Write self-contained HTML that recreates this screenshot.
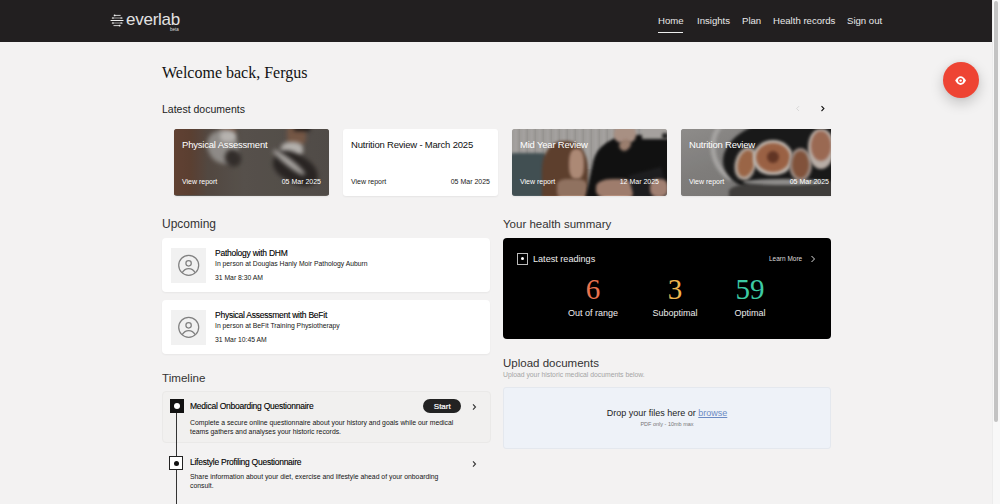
<!DOCTYPE html>
<html><head><meta charset="utf-8">
<style>
*{box-sizing:border-box;margin:0;padding:0}
html,body{width:1000px;height:504px;overflow:hidden}
body{background:#f3f2f2;font-family:"Liberation Sans",sans-serif;color:#111;position:relative}
.abs{position:absolute}
.hdr{left:0;top:0;width:992px;height:42px;background:#221f20}
.nav{color:#e8e8e8;font-size:9.6px;top:14.6px;white-space:nowrap}
.sb{left:992px;top:0;width:8px;height:504px;background:#f8f8f8;border-left:1px solid #ececec}
.thumb{left:994px;top:1px;width:4px;height:421px;background:#c3c3c3;border-radius:2px}
.serif{font-family:"Liberation Serif",serif}
.h2{font-size:10.5px;color:#222;white-space:nowrap}
.h3{font-size:12px;color:#333;white-space:nowrap}
.img{left:0;top:0;width:155px;height:67px;overflow:hidden}
.bl{filter:blur(1.5px)}
.bl2{filter:blur(2.2px)}
.card{border-radius:3px;overflow:hidden;width:155px;height:67px;top:129px;box-shadow:0 1px 2px rgba(0,0,0,.06)}
.ct{font-size:9.5px;color:#fff;left:8px;top:10px;white-space:nowrap;letter-spacing:-0.2px}
.cv{font-size:7px;color:#fff;left:8px;top:49px;white-space:nowrap}
.cd{font-size:7px;color:#fff;right:8px;top:49px;white-space:nowrap}
.up{left:162px;width:328px;height:54px;background:#fff;border-radius:4px;box-shadow:0 1px 2px rgba(0,0,0,.05)}
.ib{left:9px;top:10px;width:35px;height:35px;background:#f1f1f1}
.ut{left:53px;font-size:8.5px;color:#000;white-space:nowrap;letter-spacing:-0.25px;-webkit-text-stroke:0.12px #000}
.us{left:53px;font-size:6.8px;color:#151515;white-space:nowrap}
</style></head><body>
<div class="abs hdr"></div>
<!-- logo -->
<svg class="abs" style="left:106px;top:8px" width="24" height="24" viewBox="0 0 24 24">
<g stroke-linecap="round" fill="none">
<path d="M8.3 7.4H14.3" stroke="#cfcfcf" stroke-width="1"/>
<circle cx="8.6" cy="7.4" r="0.9" fill="#eee"/>
<path d="M6.4 10H15.9" stroke="#9a9a9a" stroke-width="1.1"/>
<path d="M6.4 10H7.4M14.9 10H15.9" stroke="#e8e8e8" stroke-width="1.2"/>
<path d="M5 12.5H17.1" stroke="#eeeeee" stroke-width="1.1"/>
<path d="M6.4 15H15.9" stroke="#9a9a9a" stroke-width="1.1"/>
<path d="M6.4 15H7.4M14.9 15H15.9" stroke="#e8e8e8" stroke-width="1.2"/>
<path d="M7.9 17.6H13.9" stroke="#cfcfcf" stroke-width="1"/>
<circle cx="13.6" cy="17.6" r="0.9" fill="#eee"/>
</g></svg>
<div class="abs" style="left:126px;top:10px;font-size:17px;color:#e2e2e2;letter-spacing:-0.25px">everlab</div>
<div class="abs" style="left:170px;top:27px;font-size:4.5px;color:#ddd">beta</div>
<div class="abs nav" style="left:658px">Home</div>
<div class="abs" style="left:658px;top:32px;width:25px;height:1px;background:#eee"></div>
<div class="abs nav" style="left:697px">Insights</div>
<div class="abs nav" style="left:742px">Plan</div>
<div class="abs nav" style="left:773px">Health records</div>
<div class="abs nav" style="left:847px">Sign out</div>

<div class="abs sb"></div>
<div class="abs thumb"></div>

<div class="abs serif" style="left:162px;top:64px;font-size:16px;color:#111;white-space:nowrap">Welcome back, Fergus</div>
<div class="abs h2" style="left:162px;top:103px">Latest documents</div>
<svg class="abs" style="left:790px;top:100px" width="40" height="16" viewBox="0 0 40 16"><path d="M9 6.2L6.6 8.6L9 11" stroke="#d8d8d8" stroke-width="1" fill="none"/><path d="M31.5 6.2L33.9 8.6L31.5 11" stroke="#111" stroke-width="1.1" fill="none"/></svg>


<!-- cards -->
<div class="abs card" style="left:174px;background:#5d5853">
  <div class="abs img">
    <div class="abs" style="left:0;top:0;width:155px;height:66px;background:linear-gradient(90deg,#6e4a3a 0%,#684838 10%,#5e524a 22%,#625c56 45%,#5c5651 100%)"></div>
    <div class="abs bl2" style="left:46px;top:-4px;width:16px;height:9px;background:#8a6a58;border-radius:40%"></div>
    <div class="abs bl2" style="left:34px;top:1px;width:30px;height:34px;background:#a29e9a;border-radius:45% 45% 50% 50%;transform:rotate(-25deg)"></div>
    <div class="abs bl2" style="left:46px;top:2px;width:16px;height:11px;background:#d0ccc8;border-radius:40%"></div>
    <div class="abs bl2" style="left:51px;top:20px;width:16px;height:18px;background:#3a3431;border-radius:50%;transform:rotate(-30deg)"></div>
    <div class="abs bl2" style="left:113px;top:-4px;width:19px;height:20px;background:#85634f;border-radius:30%"></div>
    <div class="abs bl2" style="left:120px;top:-4px;width:16px;height:6px;background:#221e1c"></div>
    <div class="abs bl2" style="left:107px;top:13px;width:22px;height:15px;background:#cdc9c5;border-radius:40%"></div>
    <div class="abs bl2" style="left:98px;top:26px;width:48px;height:28px;background:#2f2a28;border-radius:40% 50% 50% 40%;transform:rotate(30deg)"></div>
    <div class="abs bl2" style="left:95px;top:30px;width:40px;height:7px;background:#bcb8b4;border-radius:50%;transform:rotate(38deg)"></div>
    <div class="abs" style="left:0;top:0;width:155px;height:66px;background:rgba(0,0,0,.12)"></div>
  </div>
  <div class="abs ct">Physical Assessment</div>
  <div class="abs cv">View report</div>
  <div class="abs cd">05 Mar 2025</div>
</div>
<div class="abs card" style="left:343px;background:#fff">
  <div class="abs ct" style="color:#111">Nutrition Review - March 2025</div>
  <div class="abs cv" style="color:#222">View report</div>
  <div class="abs cd" style="color:#222">05 Mar 2025</div>
</div>
<div class="abs card" style="left:512px;background:#a8a5a2">
  <div class="abs img">
    <div class="abs" style="left:0;top:0;width:155px;height:40px;background:repeating-linear-gradient(90deg,#b4b1ae 0,#bcb9b6 4px,#a9a6a3 8px)"></div>
    <div class="abs bl" style="left:-4px;top:24px;width:40px;height:46px;background:#4b5a5e;border-radius:6px"></div>
    <div class="abs bl" style="left:30px;top:12px;width:46px;height:62px;background:#6a4834;border-radius:45% 45% 10% 10%"></div>
    <div class="abs bl" style="left:57px;top:20px;width:15px;height:30px;background:#c49c86;border-radius:40%"></div>
    <div class="abs bl" style="left:45px;top:50px;width:30px;height:20px;background:#a4826e;border-radius:30%"></div>
    <div class="abs bl" style="left:80px;top:6px;width:80px;height:64px;background:#141414;border-radius:40% 10% 0 0;transform:skewX(-12deg)"></div>
    <div class="abs bl" style="left:130px;top:-4px;width:30px;height:14px;background:#bcb8b4"></div>
    <div class="abs bl" style="left:102px;top:-4px;width:22px;height:18px;background:#c0a496;border-radius:40%"></div>
    <div class="abs bl" style="left:108px;top:10px;width:10px;height:12px;background:#b0907e;border-radius:40%;transform:rotate(45deg)"></div>
    <div class="abs bl" style="left:150px;top:4px;width:6px;height:6px;background:#222;border-radius:50%"></div>
    <div class="abs bl" style="left:84px;top:50px;width:40px;height:20px;background:#b48e7c;border-radius:40%"></div>
    <div class="abs bl" style="left:119px;top:42px;width:34px;height:26px;background:#222224;transform:rotate(-15deg)"></div>
    <div class="abs bl" style="left:138px;top:50px;width:18px;height:18px;background:#b89282;border-radius:40%"></div>
    <div class="abs" style="left:0;top:0;width:155px;height:66px;background:rgba(0,0,0,.12)"></div>
  </div>
  <div class="abs ct">Mid Year Review</div>
  <div class="abs cv">View report</div>
  <div class="abs cd">12 Mar 2025</div>
</div>
<div class="abs card" style="left:681px;width:150px;border-radius:3px 0 0 3px;background:#8c8a88">
  <div class="abs img">
    <div class="abs" style="left:0;top:0;width:155px;height:67px;background:linear-gradient(160deg,#9a9896 0%,#8a8886 40%,#7e7c7a 100%)"></div>
    <div class="abs bl" style="left:30px;top:-14px;width:60px;height:70px;border-radius:50%;border:5px solid #b4b2b0;border-right-color:transparent;border-bottom-color:transparent;transform:rotate(-20deg)"></div>
    <div class="abs bl" style="left:42px;top:-12px;width:140px;height:80px;background:#1c1c1c;border-radius:55% 0 0 45%"></div>
    <div class="abs bl" style="left:48px;top:52px;width:110px;height:20px;background:#454341;border-radius:50% 0 0 0"></div>
    <div class="abs bl" style="left:62px;top:50px;width:80px;height:6px;background:#9c9a98;border-radius:50%"></div>
    <div class="abs bl" style="left:54px;top:18px;width:21px;height:33px;background:#c0b4aa;border-radius:50% 40% 40% 50%;transform:rotate(15deg)"></div>
    <div class="abs bl" style="left:57px;top:21px;width:16px;height:27px;background:#a86e4c;border-radius:50%;transform:rotate(15deg)"></div>
    <div class="abs bl" style="left:72px;top:11px;width:40px;height:35px;background:#cfc6be;border-radius:50% 50% 45% 45%"></div>
    <div class="abs bl" style="left:75px;top:14px;width:34px;height:29px;background:#a86a4a;border-radius:50%"></div>
    <div class="abs bl" style="left:86px;top:22px;width:12px;height:12px;background:#6a3a28;border-radius:50%"></div>
    <div class="abs bl" style="left:108px;top:19px;width:23px;height:33px;background:#a89890;border-radius:50%"></div>
    <div class="abs bl" style="left:111px;top:22px;width:17px;height:27px;background:#8c5a40;border-radius:50%"></div>
    <div class="abs bl" style="left:127px;top:0px;width:26px;height:40px;background:#c8bcb4;border-radius:45% 45% 50% 50%"></div>
    <div class="abs bl" style="left:130px;top:2px;width:20px;height:30px;background:#a8725a;border-radius:50%"></div>
    <div class="abs" style="left:0;top:0;width:155px;height:67px;background:rgba(0,0,0,.08)"></div>
  </div>
  <div class="abs ct">Nutrition Review</div>
  <div class="abs cv">View report</div>
  <div class="abs cd" style="right:2px">05 Mar 2025</div>
</div>

<div class="abs h3" style="left:162px;top:217px">Upcoming</div>
<div class="abs up" style="top:238px">
  <div class="abs ib"><svg width="35" height="35" viewBox="0 0 35 35"><g stroke="#808080" stroke-width="1.25" fill="none"><circle cx="17.7" cy="17.3" r="10"/><circle cx="17.6" cy="15.3" r="2.7"/><path d="M11.2 24.6c1.6-2.8 3.9-4.1 6.5-4.1s4.9 1.3 6.5 4.1"/></g></svg></div>
  <div class="abs ut" style="top:10px">Pathology with DHM</div>
  <div class="abs us" style="top:22px">In person at Douglas Hanly Moir Pathology Auburn</div>
  <div class="abs us" style="top:36px">31 Mar 8:30 AM</div>
</div>
<div class="abs up" style="top:300px">
  <div class="abs ib"><svg width="35" height="35" viewBox="0 0 35 35"><g stroke="#808080" stroke-width="1.25" fill="none"><circle cx="17.7" cy="17.3" r="10"/><circle cx="17.6" cy="15.3" r="2.7"/><path d="M11.2 24.6c1.6-2.8 3.9-4.1 6.5-4.1s4.9 1.3 6.5 4.1"/></g></svg></div>
  <div class="abs ut" style="top:10px">Physical Assessment with BeFit</div>
  <div class="abs us" style="top:22px">In person at BeFit Training Physiotherapy</div>
  <div class="abs us" style="top:36px">31 Mar 10:45 AM</div>
</div>

<div class="abs h3" style="left:503px;top:218px;font-size:11.5px">Your health summary</div>
<div class="abs" style="left:503px;top:238px;width:328px;height:101px;background:#000;border-radius:4px">
  <div class="abs" style="left:14px;top:15px;width:11px;height:12px;border:1px solid #bbb"><div class="abs" style="left:3px;top:3px;width:3px;height:3px;border-radius:50%;background:#fff"></div></div>
  <div class="abs" style="left:30px;top:15.5px;font-size:9.1px;color:#eee;white-space:nowrap">Latest readings</div>
  <div class="abs" style="left:266px;top:17px;font-size:6.5px;color:#ddd;white-space:nowrap">Learn More</div>
  <svg class="abs" style="left:307px;top:17px" width="6" height="8" viewBox="0 0 6 8"><path d="M1.5 1L4.5 4L1.5 7" stroke="#ddd" stroke-width="1" fill="none"/></svg>
  <div class="abs serif" style="left:60px;top:35px;width:60px;text-align:center;font-size:29px;color:#e8734f">6</div>
  <div class="abs serif" style="left:142px;top:35px;width:60px;text-align:center;font-size:29px;color:#efb54e">3</div>
  <div class="abs serif" style="left:217px;top:35px;width:60px;text-align:center;font-size:29px;color:#3cc9a3">59</div>
  <div class="abs" style="left:50px;top:70px;width:80px;text-align:center;font-size:9px;color:#eee">Out of range</div>
  <div class="abs" style="left:132px;top:70px;width:80px;text-align:center;font-size:9px;color:#eee">Suboptimal</div>
  <div class="abs" style="left:207px;top:70px;width:80px;text-align:center;font-size:9px;color:#eee">Optimal</div>
</div>

<div class="abs h3" style="left:503px;top:356.5px;font-size:11.5px">Upload documents</div>
<div class="abs" style="left:503px;top:371px;font-size:6.8px;color:#a5a5a5;white-space:nowrap">Upload your historic medical documents below.</div>
<div class="abs" style="left:503px;top:387px;width:328px;height:62px;background:#eef2f8;border:1px solid #e4e8ee;border-radius:3px">
  <div class="abs" style="left:0;top:20px;width:326px;text-align:center;font-size:9px;color:#222">Drop your files here or <span style="color:#6b8bc4;text-decoration:underline">browse</span></div>
  <div class="abs" style="left:0;top:33px;width:326px;text-align:center;font-size:5.5px;color:#777">PDF only - 10mb max</div>
</div>

<div class="abs h3" style="left:162px;top:371px;font-size:11.6px">Timeline</div>
<div class="abs" style="left:162px;top:391px;width:329px;height:52px;background:#f1f0ef;border:1px solid #eae9e8;border-radius:4px"></div>
<div class="abs" style="left:176px;top:412px;width:1px;height:92px;background:#333"></div>
<div class="abs" style="left:170px;top:399px;width:14px;height:14px;background:#111"><div class="abs" style="left:4px;top:4px;width:6px;height:6px;border-radius:50%;background:#fff"></div></div>
<div class="abs" style="left:169px;top:456px;width:14px;height:14px;background:#fff;border:1px solid #222"><div class="abs" style="left:3.5px;top:3.5px;width:5px;height:5px;border-radius:50%;background:#111"></div></div>
<div class="abs ut" style="left:190px;top:401px">Medical Onboarding Questionnaire</div>
<div class="abs us" style="left:190px;top:418px;width:268px;line-height:9.3px;font-size:6.85px;white-space:normal">Complete a secure online questionnaire about your history and goals while our medical teams gathers and analyses your historic records.</div>
<div class="abs" style="left:423px;top:399px;width:38px;height:14px;border-radius:7px;background:#222;color:#fff;font-size:8px;text-align:center;line-height:15px;padding-left:0.5px;-webkit-text-stroke:0.2px #fff">Start</div>
<svg class="abs" style="left:471px;top:403px" width="6" height="8" viewBox="0 0 6 8"><path d="M2 1.4L4.5 4L2 6.6" stroke="#333" stroke-width="1.1" fill="none"/></svg>
<div class="abs ut" style="left:190px;top:457px">Lifestyle Profiling Questionnaire</div>
<div class="abs us" style="left:190px;top:472px;width:268px;line-height:9.3px;font-size:6.85px;white-space:normal">Share information about your diet, exercise and lifestyle ahead of your onboarding consult.</div>
<svg class="abs" style="left:471px;top:460px" width="6" height="8" viewBox="0 0 6 8"><path d="M2 1.4L4.5 4L2 6.6" stroke="#333" stroke-width="1.1" fill="none"/></svg>

<!-- FAB -->
<div class="abs" style="left:943px;top:62px;width:36px;height:36px;border-radius:50%;background:#ee4433;box-shadow:0 5px 14px rgba(0,0,0,.2),0 0 4px rgba(0,0,0,.06)">
<svg class="abs" style="left:11px;top:12px" width="14" height="14" viewBox="0 0 14 14"><path d="M1.2 6.6C2.6 3.9 4.5 2.3 6.6 2.3S10.6 3.9 12 6.6C10.6 9.3 8.7 10.9 6.6 10.9S2.6 9.3 1.2 6.6Z" fill="#fff"/><circle cx="6.6" cy="6.6" r="2.5" fill="#ee4433"/><circle cx="6.6" cy="6.6" r="1.2" fill="#fff"/></svg>
</div>
</body></html>
